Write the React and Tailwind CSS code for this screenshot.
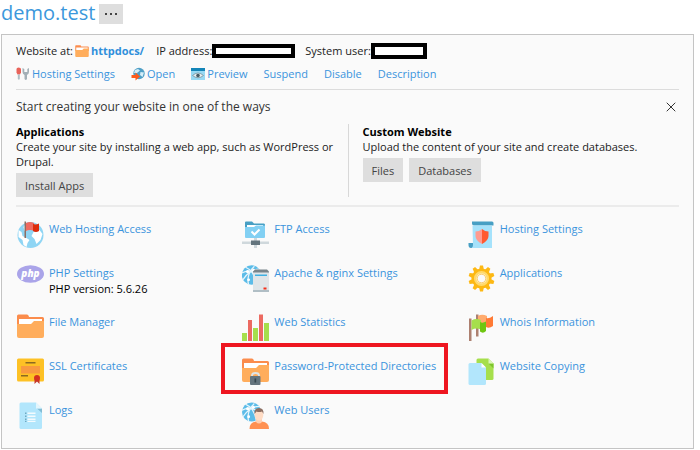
import { X } from "lucide-react";

const Globe = ({ cx = 13.5, cy = 13.5, r = 13 }) => (
  <g transform={`translate(${cx} ${cy}) scale(${r / 13})`}>
    <circle r="13" fill="#8fd5f4" />
    <path
      fill="#fff"
      d="M-12 -5 L-9 -3 L-8 1 L-4 3 L-1 5 L-3 8 L-4 12 L-7 10 L-8 5 L-12 2 Z M-5 -11 L3 -12 L1 -8 L-2 -5 L-6 -4 L-7 -8 Z M3 -3 L9 -5 L12 -1 L10 5 L6 9 L4 4 L1 1 Z"
    />
  </g>
);

const WebBall = ({ cx, cy, r }) => (
  <g transform={`translate(${cx} ${cy}) scale(${r / 10})`}>
    <circle r="10" fill="#5cbce8" />
    <path
      fill="none"
      stroke="#e6f5fc"
      strokeWidth="1.3"
      d="M-10 -2 C-5 -5 3 -5 10 2 M-6 -8 C-1 -6 4 0 5 9 M-9 5 C-5 -1 1 -6 8 -6 M-3 10 C-5 3 -2 -5 3 -9"
    />
    <circle cx="-4" cy="-3.5" r="1.7" fill="#fff" />
    <circle cx="2" cy="-5" r="1.5" fill="#fff" />
    <circle cx="-3" cy="5" r="1.5" fill="#fff" />
  </g>
);

const FolderShape = () => (
  <>
    <path fill="#fb8c4c" d="M0 2 Q0 0.5 1.5 0.5 H10 Q11.3 0.5 11.7 2 L12 3 H25.5 Q27 3 27 4.5 V12 H0 Z" />
    <path fill="#fff" d="M2 5 H25 V10 H2 Z" />
    <path fill="#ffad5c" d="M0 10 H14 L17 7 H27 V22 Q27 24 25 24 H2 Q0 24 0 22 Z" />
  </>
);

const icons = {
  access: (
    <>
      <Globe cy={14} />
      <path fill="#f06a60" d="M9 2 Q13 0 17 2 V10 Q13 8 9 10 Z" />
      <path fill="#dd2c0b" d="M16 3 Q19 4 22 2.500 V10 Q19 12 16 10 Z" />
      <path fill="#8d6e63" d="M7.500 0.500 H9 V17 H7.500 Z" />
    </>
  ),
  ftp: (
    <>
      <path fill="#479fc4" d="M3 1.500 Q3 0.500 4 0.500 H10 L12 2.500 H22 Q23 2.500 23 4 V8 H3 Z" />
      <path fill="#fff" d="M5 4 H21 V7 H5 Z" />
      <path fill="#82d0f3" d="M3 6 H12 L14 4.500 H23 V16 Q23 17 22 17 H4 Q3 17 3 16 Z" />
      <path fill="none" stroke="#fff" strokeWidth="2" d="M9.500 10.500 L12.500 13.500 L17.500 8.500" />
      <path fill="#cfd8dc" d="M0 20.500 H27 V23 H0 Z M12 17 H15 V27 H12 Z" />
      <path fill="#64757e" d="M9 19.500 H18 V24 H9 Z" />
    </>
  ),
  hosting: (
    <>
      <path fill="#479fc4" d="M4 0.500 H24 Q25.500 0.500 25.500 2 V4.500 H6 Q4 4.500 4 2.500 Z M0.500 22 H5 V27 H3 Q0.500 27 0.500 24 Z" />
      <path fill="#a5e2fb" d="M4.500 4.500 H24 V27 H3.500 Q5 26 5 24 Z" />
      <path fill="#ff9b90" d="M14 8 Q11 10.500 7.500 10.500 V15 Q7.500 19.500 14 23 Z" />
      <path fill="#ff5a30" d="M14 8 Q17 10.500 20.500 10.500 V15 Q20.500 19.500 14 23 Z" />
    </>
  ),
  php: (
    <>
      <ellipse cx="13.500" cy="9" rx="13.500" ry="8.700" fill="#aaa4e9" />
      <text
        x="13.500"
        y="12"
        textAnchor="middle"
        fill="#fff"
        className="font-['Open_Sans',sans-serif] text-[10px] font-extrabold italic"
      >
        php
      </text>
    </>
  ),
  apache: (
    <>
      <WebBall cx={9.500} cy={10} r={9.700} />
      <path fill="#dfe5e8" d="M11 6 H27 V25 H11 Z" />
      <path fill="#78848a" d="M11 6.500 L13 4.500 H25 L27 6.500 V7.500 H11 Z" />
      <path fill="#b0bec5" d="M11 25 H27 V27 H11 Z" />
      <path fill="#3fb0e2" d="M13 9.500 H25 V11 H13 Z" />
      <path fill="#f3301c" d="M21.500 22.500 H24.500 V24.500 H21.500 Z" />
    </>
  ),
  apps: (
    <>
      <g fill="#fdb813">
        <circle cx="13.500" cy="13.500" r="10" />
        {[0, 36, 72, 108, 144].map((deg) => (
          <path key={deg} d="M12 0.500 H15 L16 5 V22 L15 26.500 H12 L11 22 V5 Z" transform={`rotate(${deg} 13.5 13.5)`} />
        ))}
      </g>
      <circle cx="13.500" cy="13.500" r="6.300" fill="#fff" stroke="#ffd96b" strokeWidth="2.500" />
      <circle cx="13.500" cy="13.500" r="4.300" fill="#fafafa" stroke="#f5a60a" strokeWidth="0.600" />
    </>
  ),
  folder: <FolderShape />,
  stats: (
    <>
      <path fill="#a6df4c" d="M0 19 H5 V27 H0 Z M11 14 H16 V27 H11 Z M22 9 H27 V27 H22 Z" />
      <path fill="#ec6a61" d="M6 6 H10 V27 H6 Z M17 0.500 H21 V27 H17 Z" />
    </>
  ),
  whois: (
    <>
      <path fill="#ad8070" d="M8 0.500 H10.500 V22.500 H8 Z" />
      <path fill="#ffab6e" d="M10 2 Q14 -0.500 19 2 V11 H10 Z" />
      <path fill="#ff7a35" d="M18 4 Q21 5 25 2 V12 Q21 15 18 13 Z" />
      <path fill="#ad8070" d="M1 4.500 H3.500 V27 H1 Z" />
      <path fill="#a6df4c" d="M3.500 6.500 Q8 4 13 6 V15.500 Q8 13.500 3.500 16 Z" />
      <path fill="#6fc611" d="M12 8 Q15 9.500 18 7.500 V17 Q15 20 12 17.500 Z" />
    </>
  ),
  ssl: (
    <>
      <rect y="0.500" width="27" height="23" rx="1.500" fill="#fdc125" />
      <path fill="#8a6a22" d="M8.500 4 H18.500 V5.500 H8.500 Z M4 17 H11 V18.500 H4 Z" />
      <path fill="#f89a3f" d="M4 8 H23 V15.500 H4 Z" />
      <path fill="#c4382c" d="M17.500 21 H22.500 V26 L20 23.500 L17.500 26 Z" />
      <circle cx="20" cy="20" r="3" fill="#d5301f" />
    </>
  ),
  locked: (
    <>
      <FolderShape />
      <path fill="none" stroke="#dfe5e8" strokeWidth="1.800" d="M10 19 V17.500 Q10 15 13.500 15 Q17 15 17 17.500 V19" />
      <rect x="8" y="18" width="10.500" height="9" rx="1" fill="#65757e" />
      <path fill="#37474f" d="M12.500 20.500 H14.200 V24.500 H12.500 Z" />
    </>
  ),
  copying: (
    <>
      <path fill="#a6df4c" d="M10 0.500 H20.500 L25.500 5.500 V20.500 Q25.500 22 24 22 H10 Q8.500 22 8.500 20.500 V2 Q8.500 0.500 10 0.500 Z" />
      <path fill="#7cc52a" d="M20.500 5.500 H25.500 V10.500 Z" />
      <path fill="#dcf5b8" d="M20.500 0.500 L25.500 5.500 H20.500 Z" />
      <path fill="#b2e6fc" d="M2 5 H13.500 L18 9.500 V25.500 Q18 27 16.500 27 H2 Q0.500 27 0.500 25.500 V6.500 Q0.500 5 2 5 Z" />
      <path fill="#fff" d="M13.500 5 L18 9.500 H13.500 Z" />
    </>
  ),
  logs: (
    <>
      <path fill="#b2e6fc" d="M4 0.500 H19 L25 6.500 V25.500 Q25 27 23.500 27 H4 Q2.500 27 2.500 25.500 V2 Q2.500 0.500 4 0.500 Z" />
      <path fill="#82bcd4" d="M20 6.500 H25 V11 Z" />
      <path fill="#e3f6fd" d="M19 0.500 L25 6.500 H19 Z" />
      <path fill="#6ea9c2" d="M8 10.500 H9.500 V12 H8 Z M8 13.500 H9.500 V15 H8 Z M8 16.500 H9.500 V18 H8 Z M8 18.800 H9.500 V20 H8 Z" />
      <path fill="#f4fbfe" d="M10.500 10.500 H18.500 V12 H10.500 Z M10.500 13.500 H18.500 V15 H10.500 Z M10.500 16.500 H18.500 V18 H10.500 Z M10.500 18.800 H18.500 V20 H10.500 Z" />
    </>
  ),
  users: (
    <>
      <WebBall cx={9.500} cy={10} r={9.500} />
      <path fill="#ff9152" d="M7.500 27 Q7.500 20 14 19.500 H20 Q27 20 27 27 Z" />
      <path fill="#ffcfb0" d="M14 16 H20 V20 Q17 23 14 20 Z" />
      <ellipse cx="17" cy="13" rx="4.300" ry="5.800" fill="#ffdcc5" />
      <path fill="#8d6f62" d="M12.500 12 Q12 6 17 6 Q22 6 21.500 12 L20 9.500 Q17 10.500 14.500 9.500 Z" />
    </>
  ),
};

const services = [
  { name: "Web Hosting Access", icon: "access" },
  { name: "FTP Access", icon: "ftp" },
  { name: "Hosting Settings", icon: "hosting" },
  { name: "PHP Settings", icon: "php", note: "PHP version: 5.6.26" },
  { name: "Apache & nginx Settings", icon: "apache" },
  { name: "Applications", icon: "apps" },
  { name: "File Manager", icon: "folder" },
  { name: "Web Statistics", icon: "stats" },
  { name: "Whois Information", icon: "whois" },
  { name: "SSL Certificates", icon: "ssl" },
  { name: "Password-Protected Directories", icon: "locked", highlighted: true },
  { name: "Website Copying", icon: "copying" },
  { name: "Logs", icon: "logs" },
  { name: "Web Users", icon: "users" },
];

const ToolsIcon = () => (
  <svg viewBox="0 0 14 14" className="size-3.5" aria-hidden="true">
    <path fill="#e9635a" d="M0.500 2 Q0.500 0.500 2.500 0.500 Q5 0.500 5 2 V5.500 L4 7.500 H1.500 L0.500 5.500 Z" />
    <path fill="#b0bec5" d="M1.800 7.500 H3.800 V12 Q2.800 13.500 1.800 12 Z" />
    <path fill="#a3b0b7" d="M6.500 1 V5 Q6.500 7 8.500 8 V12 Q9.800 14 11 12 V8 Q13 7 13 5 V1 L11.300 2 V5 H8.300 V2 Z" />
  </svg>
);

const OpenIcon = () => (
  <svg viewBox="0 0 14 14" className="size-3.5" aria-hidden="true">
    <circle cx="8" cy="6.500" r="5.700" fill="#4f9fc6" />
    <path fill="#d6eef8" d="M4 3 L7 2 L9 3.500 L6 6 H3 Z M9.500 5 L13 5.500 L11.500 10 L9 8 Z" />
    <path fill="#ff5b1a" d="M0.500 8 H4.500 V5.500 L9 9.500 L4.500 13.500 V11 H0.500 Z" />
  </svg>
);

const PreviewIcon = () => (
  <svg viewBox="0 0 14 14" className="size-3.5" aria-hidden="true">
    <rect y="1" width="14" height="12" fill="#97d8f3" />
    <rect y="1" width="14" height="3" fill="#1485b8" />
    <path fill="#e4eef2" stroke="#78909c" strokeWidth="0.800" d="M1.500 8.500 Q7 3.500 12.500 8.500 Q7 13 1.500 8.500 Z" />
    <circle cx="7" cy="8.500" r="1.800" fill="#455a64" />
  </svg>
);

const actions = [
  { name: "Hosting Settings", Icon: ToolsIcon },
  { name: "Open", Icon: OpenIcon },
  { name: "Preview", Icon: PreviewIcon },
  { name: "Suspend" },
  { name: "Disable" },
  { name: "Description" },
];

const Button = ({ children }) => (
  <button type="button" className="h-6 bg-[#dedede] px-[9px] text-[#444]">
    {children}
  </button>
);

export default function App() {
  return (
    <main className="bg-white pr-1.5 pl-px font-['Open_Sans',sans-serif] text-[11px] leading-4 text-[#222]">
      <header className="flex h-[34px] items-start gap-1">
        <h1 className="text-[20px] leading-[26px] text-[#3b98dc]">
          <a href="#domain">demo.test</a>
        </h1>
        <button
          type="button"
          aria-label="More actions"
          className="mt-1 flex h-5 w-6 items-center justify-center gap-[3px] bg-[#dedede]"
        >
          <span className="size-0.5 bg-[#444]" />
          <span className="size-0.5 bg-[#444]" />
          <span className="size-0.5 bg-[#444]" />
        </button>
      </header>

      <div className="border border-[#c4c4c4] bg-[#fafafa] px-3.5 pt-2 pb-[19px]">
        <div className="flex items-center">
          <span className="mr-0.5">Website at:</span>
          <a href="#httpdocs" className="flex items-center gap-0.5 font-bold text-[#2f8fdb]">
            <svg viewBox="0 0 27 24" className="h-3 w-3.5" aria-hidden="true">
              <FolderShape />
            </svg>
            httpdocs/
          </a>
          <span className="ml-3">IP address:</span>
          <span className="h-3.5 w-[83px] border-4 border-black bg-white" />
          <span className="ml-2.5">System user:</span>
          <span className="h-4 w-14 border-4 border-black bg-white" />
        </div>

        <nav className="mt-[7px] flex gap-4 border-b border-[#dcdcdc] pb-[7px]">
          {actions.map(({ name, Icon }) => (
            <a key={name} href="#action" className="flex items-center gap-0.5 text-[#3b94dd]">
              {Icon && <Icon />}
              {name}
            </a>
          ))}
        </nav>

        <section className="border-b-2 border-[#ebebeb] pt-[7px] pb-2">
          <div className="flex items-center justify-between">
            <h2 className="text-[12px] leading-5 text-[#333]">
              Start creating your website in one of the ways
            </h2>
            <button type="button" aria-label="Close" className="text-[#333]">
              <X className="size-4" strokeWidth={1.5} />
            </button>
          </div>
          <div className="mt-[7px] grid grid-cols-2 leading-[15px]">
            <div className="pr-3.5">
              <h3 className="font-bold text-black">Applications</h3>
              <p className="mb-1">
                Create your site by installing a web app, such as WordPress or Drupal.
              </p>
              <Button>Install Apps</Button>
            </div>
            <div className="border-l border-[#d8d8d8] pl-3.5">
              <h3 className="font-bold text-black">Custom Website</h3>
              <p className="mb-1">Upload the content of your site and create databases.</p>
              <div className="flex gap-1.5">
                <Button>Files</Button>
                <Button>Databases</Button>
              </div>
            </div>
          </div>
        </section>

        <ul className="grid grid-cols-3 gap-x-3.5 gap-y-[17px] pt-3.5 pl-px">
          {services.map(({ name, icon, note, highlighted }) => (
            <li key={name} className="relative flex gap-[5px]">
              <svg viewBox="0 0 27 27" className="size-[27px] shrink-0" aria-hidden="true">
                {icons[icon]}
              </svg>
              <div>
                <a href="#service" className="block whitespace-nowrap text-[#3b94dd]">
                  {name}
                </a>
                {note && <p className="text-black">{note}</p>}
              </div>
              {highlighted && (
                <div className="pointer-events-none absolute -top-[15px] right-1.5 -bottom-[9px] -left-[21px] border-4 border-[#ee1620]" />
              )}
            </li>
          ))}
        </ul>
      </div>
    </main>
  );
}
